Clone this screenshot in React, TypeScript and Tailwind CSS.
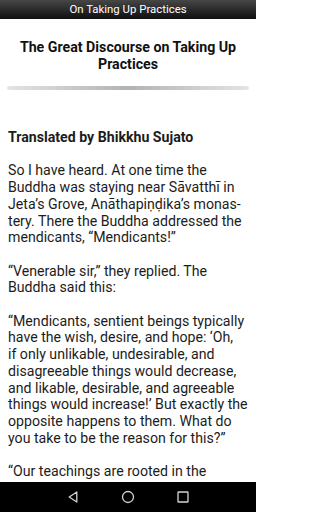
import * as React from "react";

// lines are broken as the reference app breaks them (balanced, not greedy)
const paragraphs: string[][] = [
  [
    "So I have heard. At one time the",
    "Buddha was staying near Sāvatthī in",
    "Jeta’s Grove, Anāthapiṇḍika’s monas-",
    "tery. There the Buddha addressed the",
    "mendicants, “Mendicants!”",
  ],
  ["“Venerable sir,” they replied. The", "Buddha said this:"],
  [
    "“Mendicants, sentient beings typically",
    "have the wish, desire, and hope: ‘Oh,",
    "if only unlikable, undesirable, and",
    "disagreeable things would decrease,",
    "and likable, desirable, and agreeable",
    "things would increase!’ But exactly the",
    "opposite happens to them. What do",
    "you take to be the reason for this?”",
  ],
  ["“Our teachings are rooted in the"],
];

function NavBar() {
  return (
    <div className="h-[30px] bg-black flex items-center justify-center gap-[41px] shrink-0">
      <svg width="14" height="14" viewBox="0 0 14 14">
        <path d="M10.8 2 L3.2 7 L10.8 12 Z" fill="none" stroke="#d4d4d4" strokeWidth="1.3" strokeLinejoin="round" />
      </svg>
      <svg width="14" height="14" viewBox="0 0 14 14">
        <circle cx="7" cy="7" r="5.5" fill="none" stroke="#d4d4d4" strokeWidth="1.3" />
      </svg>
      <svg width="14" height="14" viewBox="0 0 14 14">
        <rect x="2" y="2" width="10" height="10" rx="0.6" fill="none" stroke="#d4d4d4" strokeWidth="1.3" />
      </svg>
    </div>
  );
}

export default function App() {
  return (
    <div
      className="w-[256px] h-[512px] flex flex-col bg-white overflow-hidden"
      style={{ fontFamily: "Roboto, 'Liberation Sans', sans-serif" }}
    >
      <div className="h-[19px] shrink-0 bg-gradient-to-b from-[#474747] to-[#101010] flex items-center justify-center">
        <span className="text-white text-[11.4px] leading-none">On Taking Up Practices</span>
      </div>
      <div className="flex-1 overflow-hidden">
        <h1 className="mt-[20px] px-[14px] text-center font-bold text-[14.2px] leading-[17px] text-[#111]">
          The Great Discourse on Taking Up Practices
        </h1>
        <div className="mx-[7px] mt-[13px] h-[4px] rounded-full bg-gradient-to-r from-[#e4e4e4] via-[#b3b3b3] to-[#e4e4e4]" />
        <div className="pl-[8px] pr-[7px] pt-[39px] text-[14.15px] leading-[16.7px] text-[#1c1c1c]">
          <p className="font-bold mb-[16.7px]">Translated by Bhikkhu Sujato</p>
          {paragraphs.map((lines, i) => (
            <p key={i} className="mb-[16.7px]">
              {lines.map((l, j) => (
                <span key={j} className="block whitespace-nowrap">
                  {l}
                </span>
              ))}
            </p>
          ))}
        </div>
      </div>
      <NavBar />
    </div>
  );
}
